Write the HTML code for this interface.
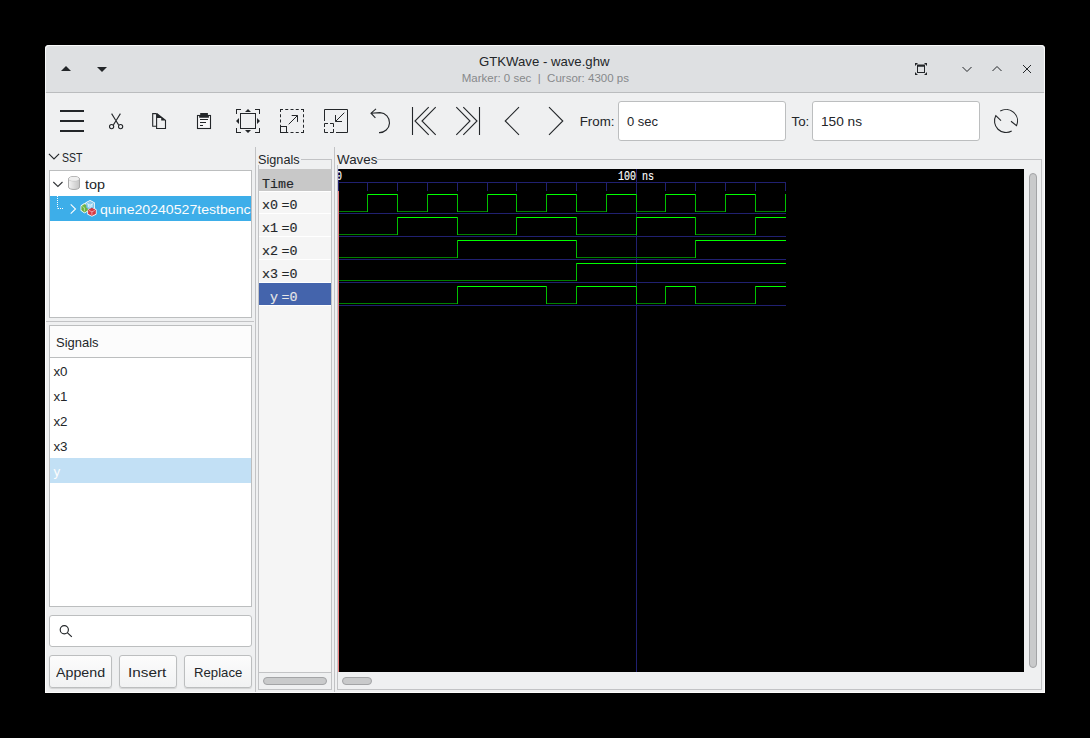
<!DOCTYPE html>
<html>
<head>
<meta charset="utf-8">
<title>GTKWave - wave.ghw</title>
<style>
html,body{margin:0;padding:0;}
body{width:1090px;height:738px;background:#000;overflow:hidden;position:relative;font-family:"Liberation Sans",sans-serif;color:#232629;}
.a{position:absolute;}
.t{position:absolute;white-space:nowrap;line-height:1;}
#win{left:45px;top:45px;width:1000px;height:648px;background:#eff0f1;border-radius:4px 4px 0 0;overflow:hidden;}
#winb{left:45px;top:45px;width:998px;height:646px;border:1px solid rgba(255,255,255,.85);border-radius:4px 4px 0 0;}
#tb{left:45px;top:45px;width:1000px;height:47px;background:#dee0e2;border-radius:4px 4px 0 0;}
#tbl{left:45px;top:92px;width:1000px;height:1px;background:#babcbe;}
.box{position:absolute;background:#fff;border:1px solid #bcbebf;box-sizing:border-box;}
.entry{border-radius:3px;}
.btn{position:absolute;box-sizing:border-box;border:1px solid #bcbebf;border-radius:3px;background:linear-gradient(#fcfcfc,#f1f2f3);box-shadow:0 1px 1px rgba(0,0,0,.12);}
.vl{position:absolute;width:1px;background:#c2c3c5;}
.hl{position:absolute;height:1px;background:#c2c3c5;}
.mono{font-family:"Liberation Mono",monospace;-webkit-text-stroke:0.15px currentColor;}
.thumb{position:absolute;box-sizing:border-box;background:#c9cacb;border:1px solid #a3a4a6;border-radius:4px;}
svg{position:absolute;overflow:visible;}
</style>
</head>
<body>
<div id="win" class="a"></div>
<div id="tb" class="a"></div>
<div id="tbl" class="a"></div>

<!-- title bar -->
<svg style="left:45px;top:45px" width="1000" height="48" viewBox="45 45 1000 48">
  <path d="M61 71 L66 66 L71 71 Z" fill="#232629"/>
  <path d="M97 67 L107 67 L102 72 Z" fill="#232629"/>
  <!-- fullscreen -->
  <g fill="none" stroke="#232629">
    <rect x="917.5" y="66" width="7" height="6.5" />
    <path d="M917 65.5 H925" stroke-width="2"/>
  </g>
  <g fill="#232629">
    <path d="M915 63 h3 l-3 3z M927 63 v3 l-3 -3z M915 75 v-3 l3 3z M927 75 h-3 l3 -3z"/>
  </g>
  <!-- min / max / close -->
  <g fill="none" stroke="#232629" stroke-width="1">
    <path d="M962.5 67 L967 71.5 L971.5 67"/>
    <path d="M992.5 71 L997 66.5 L1001.5 71"/>
    <path d="M1023 65 L1031 73 M1031 65 L1023 73"/>
  </g>
</svg>
<div class="t" id="title" style="left:479.30px;top:55.42px;font-size:13.33px;transform:scaleX(0.9880);transform-origin:0 0;">GTKWave - wave.ghw</div>
<div class="t" id="sub" style="left:461.70px;top:73.37px;font-size:11.5px;color:#87898b;transform:scaleX(1.0000);transform-origin:0 0;">Marker: 0 sec &nbsp;|&nbsp; Cursor: 4300 ps</div>

<!-- toolbar -->
<svg id="tools" style="left:45px;top:93px" width="1000" height="56" viewBox="45 93 1000 56">
  <!-- hamburger -->
  <g fill="#232629">
    <rect x="60" y="110" width="24" height="2"/><rect x="60" y="120" width="24" height="2"/><rect x="60" y="130" width="24" height="2"/>
  </g>

  <!-- cut -->
  <g fill="none" stroke="#232629" stroke-width="1.1">
    <path d="M111.6 113.6 L116 120.8 L118.6 124.9 M120.4 113.6 L116 120.8 L113.4 124.9"/>
    <circle cx="111.6" cy="126.6" r="2.1"/><circle cx="120.6" cy="126.6" r="2.1"/>
  </g>
  <!-- copy -->
  <g fill="none" stroke="#232629" stroke-width="1.1">
    <path d="M156.6 113.6 H152.7 V126.2 H156.6"/>
    <path d="M156.6 113.6 V128.5 H165.5 V120"/>
  </g>
  <path d="M157 113.1 L166 120 V120.6 H161.2 V118 H157 Z" fill="#232629"/>
  <!-- paste -->
  <rect x="197.5" y="115.5" width="13" height="13" fill="#f7f7f8" stroke="#232629" stroke-width="1.1"/>
  <path d="M200.2 113 H207.9 V115 H208.9 V117.7 H199.2 V115 H200.2 Z" fill="#232629"/>
  <g fill="#232629"><rect x="200" y="119" width="8" height="1"/><rect x="200" y="122" width="6" height="1"/><rect x="200" y="125" width="3" height="1"/></g>
  <!-- zoom fit : box 236..260 x 109..133 -->
  <g transform="translate(232 105)" fill="#232629">
    <path d="M4 4v5h1V5h4V4H4zm19 0v1h4v4h1V4h-5zM16 4l-3 3h6zM8 8v16h16V8zm1 1h14v14H9zM7 13l-3 3 3 3zm18 0v6l3-3zM4 23v5h5v-1H5v-4zm23 0v4h-4v1h5v-5zM13 25l3 3 3-3z"/>
  </g>
  <!-- zoom in : box 280..304 -->
  <g transform="translate(280 109)" fill="none" stroke="#232629" stroke-width="1">
    <path d="M0 0.5 H24" stroke-dasharray="3 2.25"/>
    <path d="M23.5 0 V24" stroke-dasharray="3 2.25"/>
    <path d="M0.5 0 V17" stroke-dasharray="3 2.25"/>
    <path d="M24 23.5 H7" stroke-dasharray="3 2.25"/>
    <rect x="0.5" y="17.5" width="6" height="6"/>
    <path d="M8.7 15.3 L17.5 6.5 M11.7 6.5 H17.5 V12.9"/>
  </g>
  <!-- zoom out : box 324..348 -->
  <g transform="translate(324 109)" fill="none" stroke="#232629" stroke-width="1">
    <path d="M0.5 12 V0.5 H23.5 V23.5 H12"/>
    <rect x="0.5" y="14.5" width="9" height="9" stroke-dasharray="3.5 2 3.5 0"/>
    <path d="M20.3 3.7 L11.5 12.5 M11.5 6 V12.5 H18"/>
  </g>
  <!-- undo -->
  <g fill="none" stroke="#232629" stroke-width="1.1">
    <path d="M376 108.8 L371 113.2 L375.4 117.9 M371 113.2 L380 112.6 A10 10 0 0 1 379 132.6"/>
  </g>
  <!-- first -->
  <g fill="none" stroke="#232629" stroke-width="1.1">
    <path d="M412.5 107 V135 M428.7 107.2 L415 121 L428.7 134.8 M435.7 107.2 L422 121 L435.7 134.8"/>
    <path d="M479.5 107 V135 M463.3 107.2 L477 121 L463.3 134.8 M456.3 107.2 L470 121 L456.3 134.8"/>
    <path d="M519 107.2 L505.2 121 L519 134.8"/>
    <path d="M549 107.2 L562.8 121 L549 134.8"/>
  </g>
  <!-- reload -->
  <g fill="none" stroke="#232629" stroke-width="1.1" transform="translate(1006 121)">
    <path d="M-5.75 -9.96 A11.5 11.5 0 0 1 10.5 4.68 L5.0 0.3"/>
    <path d="M5.68 10 A11.5 11.5 0 0 1 -10.15 -5.4 L-5.0 -0.3"/>
  </g>
</svg>

<div class="t" id="from" style="left:579.70px;top:114.92px;font-size:13.33px;transform:scaleX(1.0000);transform-origin:0 0;">From:</div>
<div class="box entry" style="left:618px;top:101px;width:168px;height:40px;"></div>
<div class="t" id="fromv" style="left:626.80px;top:114.92px;font-size:13.33px;transform:scaleX(0.9754);transform-origin:0 0;">0 sec</div>
<div class="t" id="to" style="left:791.50px;top:114.92px;font-size:13.33px;transform:scaleX(1.0000);transform-origin:0 0;">To:</div>
<div class="box entry" style="left:812px;top:101px;width:168px;height:40px;"></div>
<div class="t" id="tov" style="left:821.30px;top:114.92px;font-size:13.33px;transform:scaleX(1.0256);transform-origin:0 0;">150 ns</div>

<!-- left pane -->
<div class="t" id="sst" style="left:61.80px;top:150.82px;font-size:13.33px;transform:scaleX(0.7885);transform-origin:0 0;">SST</div>
<div class="box" style="left:49px;top:170px;width:203px;height:148px;"></div>
<div class="a" style="left:50px;top:196px;width:201px;height:25px;background:#3daee9;"></div>
<div class="t" id="top" style="left:84.50px;top:178.22px;font-size:13.33px;transform:scaleX(1.0789);transform-origin:0 0;">top</div>
<div class="a" style="left:99px;top:196px;width:152px;height:25px;overflow:hidden;"><div class="t" id="quine" style="left:0.5px;top:6.6px;font-size:13.33px;color:#fcfcfc;transform:scaleX(1.058);transform-origin:0 0;">quine20240527testbench</div></div>

<div class="hl" style="left:46px;top:321px;width:208px;"></div>
<div class="box" style="left:49px;top:325px;width:203px;height:282px;"></div>
<div class="a" style="left:50px;top:326px;width:201px;height:31px;background:#fcfcfc;"></div>
<div class="hl" style="left:50px;top:357px;width:201px;background:#bcbebf;"></div>
<div class="t" id="sigh" style="left:55.64px;top:335.52px;font-size:13.33px;transform:scaleX(0.9721);transform-origin:0 0;">Signals</div>
<div class="a" style="left:50px;top:458px;width:201px;height:25px;background:#c2e0f5;"></div>
<div class="t" id="l0" style="left:53.40px;top:364.62px;font-size:13.33px;transform:scaleX(1.0000);transform-origin:0 0;">x0</div>
<div class="t" id="l1" style="left:53.40px;top:389.62px;font-size:13.33px;transform:scaleX(1.0000);transform-origin:0 0;">x1</div>
<div class="t" id="l2" style="left:53.40px;top:414.62px;font-size:13.33px;transform:scaleX(1.0000);transform-origin:0 0;">x2</div>
<div class="t" id="l3" style="left:53.40px;top:439.62px;font-size:13.33px;transform:scaleX(1.0000);transform-origin:0 0;">x3</div>
<div class="t" id="l4" style="left:53.4px;top:464.6px;font-size:13.33px;color:#fcfcfc;">y</div>

<div class="box entry" style="left:49px;top:615px;width:203px;height:32px;"></div>
<div class="btn" style="left:49px;top:655px;width:63px;height:33px;"></div>
<div class="btn" style="left:119px;top:655px;width:58px;height:33px;"></div>
<div class="btn" style="left:184px;top:655px;width:68px;height:33px;"></div>
<div class="t" id="b0" style="left:56.00px;top:665.62px;font-size:13.33px;transform:scaleX(1.0674);transform-origin:0 0;">Append</div>
<div class="t" id="b1" style="left:128.30px;top:665.62px;font-size:13.33px;transform:scaleX(1.1485);transform-origin:0 0;">Insert</div>
<div class="t" id="b2" style="left:193.62px;top:665.62px;font-size:13.33px;transform:scaleX(0.9877);transform-origin:0 0;">Replace</div>


<svg id="lefticons" style="left:0;top:0" width="340" height="738" viewBox="0 0 340 738">
  <defs>
    <linearGradient id="cyl" x1="0" x2="1" y1="0" y2="0"><stop offset="0" stop-color="#f4f4f4"/><stop offset="0.55" stop-color="#d9d9d9"/><stop offset="1" stop-color="#c4c4c4"/></linearGradient>
  </defs>
  <path d="M48.9 153.9 L54 159 L59.1 153.9" fill="none" stroke="#232629" stroke-width="1.1"/>
  <path d="M53.3 182 L57.9 186.5 L62.5 182" fill="none" stroke="#34373a" stroke-width="1.1"/>
  <!-- cylinder -->
  <path d="M68.5 179 C68.5 175.7 79.5 175.7 79.5 179 V187 C79.5 190.3 68.5 190.3 68.5 187 Z" fill="url(#cyl)" stroke="#a9a9a9" stroke-width="1"/>
  <path d="M68.5 179 C68.5 181.6 79.5 181.6 79.5 179" fill="none" stroke="#bdbdbd" stroke-width="0.8"/>
  <ellipse cx="74" cy="178.7" rx="5" ry="2" fill="#efefef"/>
  <!-- dotted -->
  <path d="M57.5 196 V208.5" stroke="#fff" stroke-width="1" stroke-dasharray="1 1" fill="none"/>
  <path d="M58 208.5 H64" stroke="#fff" stroke-width="1" stroke-dasharray="1 1" fill="none"/>
  <path d="M70.7 204.3 L75.5 209 L70.7 213.7" fill="none" stroke="#fcfcfc" stroke-width="1.1"/>
  <!-- module icon: three cubes -->
  <g stroke="#fff" stroke-width="2.2" stroke-linejoin="round" fill="#fff">
    <path d="M84.6 204.2 L87.5 206.2 V210.2 L84.6 212.2 L81.7 210.2 V206.2 Z"/><path d="M90.1 201.2 L93.9 203.2 V207.4 L90.1 209.4 L86.3 207.4 V203.2 Z"/><path d="M91.9 208.1 L95.5 210.0 V213.7 L91.9 215.5 L88.3 213.7 V210.0 Z"/>
  </g>
  <g stroke-linejoin="round">
    <path d="M84.6 204.2 L87.5 206.2 V210.2 L84.6 212.2 L81.7 210.2 V206.2 Z" fill="#6fb441" stroke="#4e9a2a" stroke-width="0.5"/>
    <path d="M82.4 206.6 L84.4 207.8 V211.4" fill="none" stroke="#cdeab5" stroke-width="0.8"/>
    <path d="M90.1 201.2 L93.9 203.2 V207.4 L90.1 209.4 L86.3 207.4 V203.2 Z" fill="#8bcdee" stroke="#58a9d6" stroke-width="0.5"/>
    <path d="M87 203.6 L90.1 205.2 L93.2 203.6 M90.1 205.2 V208.8 M88.6 204.2 v3 M91.8 204 v3" fill="none" stroke="#e4f4fc" stroke-width="0.9"/>
    <path d="M91.9 208.1 L95.5 210.0 V213.7 L91.9 215.5 L88.3 213.7 V210.0 Z" fill="#da3a44" stroke="#b51e28" stroke-width="0.5"/>
    <path d="M89 210.4 L91.9 211.8 L94.8 210.4 M91.9 211.8 V215" fill="none" stroke="#f4b3b7" stroke-width="0.8"/>
  </g>
  <!-- search icon -->
  <g fill="none" stroke="#232629" stroke-width="1.15">
    <circle cx="64.3" cy="629.7" r="4.1"/><path d="M67.3 632.7 L71.8 636.9"/>
  </g>
</svg>
<!-- pane separators -->
<div class="vl" style="left:255px;top:147px;height:545px;"></div>
<div class="vl" style="left:334px;top:147px;height:545px;"></div>

<!-- signals frame -->
<div class="t" id="sigf" style="left:257.64px;top:153.42px;font-size:13.33px;transform:scaleX(0.9518);transform-origin:0 0;">Signals</div>
<div class="hl" style="left:301px;top:159px;width:31px;"></div>
<div class="vl" style="left:258px;top:165px;height:525px;"></div>
<div class="vl" style="left:331px;top:159px;height:531px;"></div>
<div class="hl" style="left:258px;top:689px;width:74px;"></div>
<div class="a" style="left:259px;top:169px;width:72px;height:503px;background:#f5f5f5;"></div>
<div class="a" style="left:259px;top:169px;width:72px;height:22px;background:#c8c8c8;"></div>
<div class="hl" style="left:259px;top:672px;width:72px;"></div>

<div class="t mono" id="sTime" style="left:262px;top:177.6px;font-size:13.33px;">Time</div>
<div class="t mono" id="sn0" style="left:262px;top:199px;font-size:13.33px;color:#232629;">x0</div>
<div class="t mono" id="sv0" style="left:281.5px;top:199px;font-size:13.33px;color:#232629;">=0</div>
<div class="t mono" id="sn1" style="left:262px;top:222px;font-size:13.33px;color:#232629;">x1</div>
<div class="t mono" id="sv1" style="left:281.5px;top:222px;font-size:13.33px;color:#232629;">=0</div>
<div class="t mono" id="sn2" style="left:262px;top:245px;font-size:13.33px;color:#232629;">x2</div>
<div class="t mono" id="sv2" style="left:281.5px;top:245px;font-size:13.33px;color:#232629;">=0</div>
<div class="t mono" id="sn3" style="left:262px;top:268px;font-size:13.33px;color:#232629;">x3</div>
<div class="t mono" id="sv3" style="left:281.5px;top:268px;font-size:13.33px;color:#232629;">=0</div>
<div class="a" style="left:259px;top:283px;width:72px;height:22px;background:#4464ac;"></div>
<div class="t mono" id="sn4" style="left:270px;top:291px;font-size:13.33px;color:#e8e8e8;">y</div>
<div class="t mono" id="sv4" style="left:281.5px;top:291px;font-size:13.33px;color:#e8e8e8;">=0</div>
<div class="hl" style="left:259px;top:191px;width:72px;background:#fff;"></div>
<div class="hl" style="left:259px;top:213px;width:72px;background:#fff;"></div>
<div class="hl" style="left:259px;top:236px;width:72px;background:#fff;"></div>
<div class="hl" style="left:259px;top:259px;width:72px;background:#fff;"></div>
<div class="hl" style="left:259px;top:282px;width:72px;background:#fff;"></div>
<div class="hl" style="left:259px;top:305px;width:72px;background:#fff;"></div>

<div class="thumb" style="left:263px;top:677px;width:64px;height:8px;"></div>

<!-- waves frame -->
<div class="t" id="wavf" style="left:337.10px;top:153.32px;font-size:13.33px;transform:scaleX(1.0000);transform-origin:0 0;">Waves</div>
<div class="hl" style="left:377px;top:159px;width:665px;"></div>
<div class="vl" style="left:337px;top:165px;height:525px;"></div>
<div class="vl" style="left:1041px;top:159px;height:531px;"></div>
<div class="hl" style="left:337px;top:689px;width:705px;"></div>
<div class="a" style="left:338px;top:169px;width:686px;height:503px;background:#000;"></div>
<svg id="waves" style="left:0;top:0" width="1090" height="738" viewBox="0 0 1090 738" shape-rendering="crispEdges">
<rect x="636" y="169" width="1" height="503" fill="#202070"/>
<rect x="338" y="182" width="448" height="1" fill="#202070"/>
<rect x="338" y="182" width="1" height="9" fill="#202070"/>
<rect x="367" y="182" width="1" height="9" fill="#202070"/>
<rect x="397" y="182" width="1" height="9" fill="#202070"/>
<rect x="427" y="182" width="1" height="9" fill="#202070"/>
<rect x="457" y="182" width="1" height="9" fill="#202070"/>
<rect x="487" y="182" width="1" height="9" fill="#202070"/>
<rect x="516" y="182" width="1" height="9" fill="#202070"/>
<rect x="546" y="182" width="1" height="9" fill="#202070"/>
<rect x="576" y="182" width="1" height="9" fill="#202070"/>
<rect x="606" y="182" width="1" height="9" fill="#202070"/>
<rect x="636" y="182" width="1" height="9" fill="#202070"/>
<rect x="665" y="182" width="1" height="9" fill="#202070"/>
<rect x="695" y="182" width="1" height="9" fill="#202070"/>
<rect x="725" y="182" width="1" height="9" fill="#202070"/>
<rect x="755" y="182" width="1" height="9" fill="#202070"/>
<rect x="785" y="182" width="1" height="9" fill="#202070"/>
<rect x="338" y="169" width="1" height="22" fill="#202070"/>
<rect x="338" y="213" width="448" height="1" fill="#202070"/>
<rect x="338" y="236" width="448" height="1" fill="#202070"/>
<rect x="338" y="259" width="448" height="1" fill="#202070"/>
<rect x="338" y="282" width="448" height="1" fill="#202070"/>
<rect x="338" y="305" width="448" height="1" fill="#202070"/>
<rect x="338" y="191" width="1" height="481" fill="#f08080"/>
<rect x="339" y="211" width="29" height="1" fill="#008000"/>
<rect x="367" y="194" width="31" height="1" fill="#00ff00"/>
<rect x="397" y="211" width="31" height="1" fill="#008000"/>
<rect x="427" y="194" width="31" height="1" fill="#00ff00"/>
<rect x="457" y="211" width="31" height="1" fill="#008000"/>
<rect x="487" y="194" width="30" height="1" fill="#00ff00"/>
<rect x="516" y="211" width="31" height="1" fill="#008000"/>
<rect x="546" y="194" width="31" height="1" fill="#00ff00"/>
<rect x="576" y="211" width="31" height="1" fill="#008000"/>
<rect x="606" y="194" width="31" height="1" fill="#00ff00"/>
<rect x="636" y="211" width="30" height="1" fill="#008000"/>
<rect x="665" y="194" width="31" height="1" fill="#00ff00"/>
<rect x="695" y="211" width="31" height="1" fill="#008000"/>
<rect x="725" y="194" width="31" height="1" fill="#00ff00"/>
<rect x="755" y="211" width="31" height="1" fill="#008000"/>
<rect x="785" y="194" width="1" height="1" fill="#00ff00"/>
<rect x="367" y="194" width="1" height="18" fill="#00c000"/>
<rect x="397" y="194" width="1" height="18" fill="#00c000"/>
<rect x="427" y="194" width="1" height="18" fill="#00c000"/>
<rect x="457" y="194" width="1" height="18" fill="#00c000"/>
<rect x="487" y="194" width="1" height="18" fill="#00c000"/>
<rect x="516" y="194" width="1" height="18" fill="#00c000"/>
<rect x="546" y="194" width="1" height="18" fill="#00c000"/>
<rect x="576" y="194" width="1" height="18" fill="#00c000"/>
<rect x="606" y="194" width="1" height="18" fill="#00c000"/>
<rect x="636" y="194" width="1" height="18" fill="#00c000"/>
<rect x="665" y="194" width="1" height="18" fill="#00c000"/>
<rect x="695" y="194" width="1" height="18" fill="#00c000"/>
<rect x="725" y="194" width="1" height="18" fill="#00c000"/>
<rect x="755" y="194" width="1" height="18" fill="#00c000"/>
<rect x="785" y="194" width="1" height="18" fill="#00c000"/>
<rect x="785" y="194" width="1" height="18" fill="#00c000"/>
<rect x="339" y="234" width="59" height="1" fill="#008000"/>
<rect x="397" y="217" width="61" height="1" fill="#00ff00"/>
<rect x="457" y="234" width="60" height="1" fill="#008000"/>
<rect x="516" y="217" width="61" height="1" fill="#00ff00"/>
<rect x="576" y="234" width="61" height="1" fill="#008000"/>
<rect x="636" y="217" width="60" height="1" fill="#00ff00"/>
<rect x="695" y="234" width="61" height="1" fill="#008000"/>
<rect x="755" y="217" width="31" height="1" fill="#00ff00"/>
<rect x="397" y="217" width="1" height="18" fill="#00c000"/>
<rect x="457" y="217" width="1" height="18" fill="#00c000"/>
<rect x="516" y="217" width="1" height="18" fill="#00c000"/>
<rect x="576" y="217" width="1" height="18" fill="#00c000"/>
<rect x="636" y="217" width="1" height="18" fill="#00c000"/>
<rect x="695" y="217" width="1" height="18" fill="#00c000"/>
<rect x="755" y="217" width="1" height="18" fill="#00c000"/>
<rect x="339" y="257" width="119" height="1" fill="#008000"/>
<rect x="457" y="240" width="120" height="1" fill="#00ff00"/>
<rect x="576" y="257" width="120" height="1" fill="#008000"/>
<rect x="695" y="240" width="91" height="1" fill="#00ff00"/>
<rect x="457" y="240" width="1" height="18" fill="#00c000"/>
<rect x="576" y="240" width="1" height="18" fill="#00c000"/>
<rect x="695" y="240" width="1" height="18" fill="#00c000"/>
<rect x="339" y="280" width="238" height="1" fill="#008000"/>
<rect x="576" y="263" width="210" height="1" fill="#00ff00"/>
<rect x="576" y="263" width="1" height="18" fill="#00c000"/>
<rect x="339" y="303" width="119" height="1" fill="#008000"/>
<rect x="457" y="286" width="90" height="1" fill="#00ff00"/>
<rect x="546" y="303" width="31" height="1" fill="#008000"/>
<rect x="576" y="286" width="61" height="1" fill="#00ff00"/>
<rect x="636" y="303" width="30" height="1" fill="#008000"/>
<rect x="665" y="286" width="31" height="1" fill="#00ff00"/>
<rect x="695" y="303" width="61" height="1" fill="#008000"/>
<rect x="755" y="286" width="31" height="1" fill="#00ff00"/>
<rect x="457" y="286" width="1" height="18" fill="#00c000"/>
<rect x="546" y="286" width="1" height="18" fill="#00c000"/>
<rect x="576" y="286" width="1" height="18" fill="#00c000"/>
<rect x="636" y="286" width="1" height="18" fill="#00c000"/>
<rect x="665" y="286" width="1" height="18" fill="#00c000"/>
<rect x="695" y="286" width="1" height="18" fill="#00c000"/>
<rect x="755" y="286" width="1" height="18" fill="#00c000"/>
</svg>
<div class="t mono" id="tm0" style="left:338px;top:171.4px;width:5px;height:13px;overflow:hidden;font-size:12px;color:#fff;"><span style="display:inline-block;margin-left:-2.2px;transform:scaleX(0.8333);transform-origin:0 0;">0</span></div>
<div class="t mono" id="tm100" style="left:618px;top:171.4px;font-size:12px;color:#fff;transform:scaleX(0.8333);transform-origin:0 0;">100 ns</div>
<div class="thumb" style="left:342px;top:677px;width:30px;height:8px;"></div>
<div class="thumb" style="left:1029px;top:173px;width:8px;height:495px;"></div>

<div id="winb" class="a"></div>
</body>
</html>
